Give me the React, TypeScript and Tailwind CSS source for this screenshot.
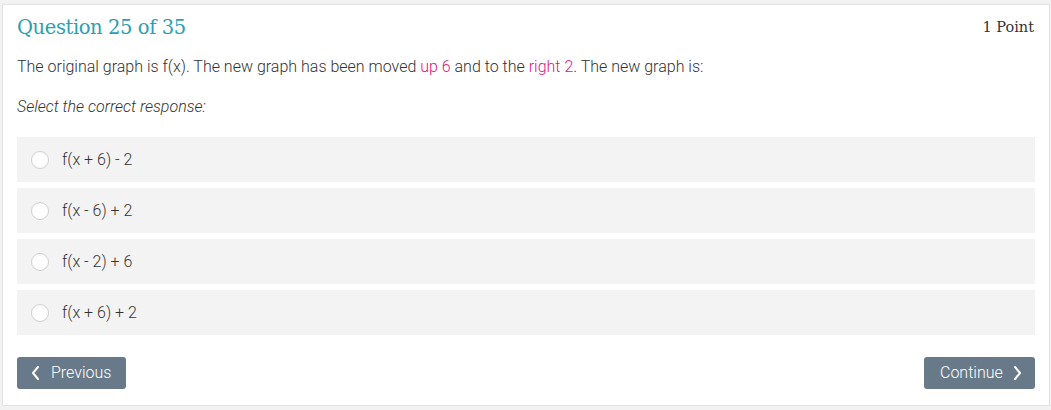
import React from "react";

const options = ["f(x + 6) - 2", "f(x - 6) + 2", "f(x - 2) + 6", "f(x + 6) + 2"];

export default function App() {
  return (
    <div className="w-[1051px] h-[410px] bg-[#f2f2f2] pt-[4px] pl-[2px] pr-[1px]" style={{ fontFamily: "Roboto, 'Noto Sans', sans-serif" }}>
      <div className="bg-white border border-[#e2e2e2] h-[402px] px-[14px] pt-[10px] flex flex-col">
        <div className="flex items-center justify-between h-[26px]">
          <div className="text-[19.5px] text-[#2aa0b3] tracking-[-0.4px]" style={{ fontFamily: "'DejaVu Serif', serif", fontWeight: 300 }}>
            Question 25 of 35
          </div>
          <div className="text-[14.5px] text-[#333] pr-[1px]" style={{ fontFamily: "'DejaVu Serif', serif" }}>1 Point</div>
        </div>
        <p className="mt-[16px] text-[16px] font-light text-[#333] leading-[20px]">
          The original graph is f(x). The new graph has been moved <span className="text-[#e0157b]">up 6</span> and to the{" "}
          <span className="text-[#e0157b]">right 2</span>. The new graph is:
        </p>
        <p className="mt-[20px] text-[16px] font-light italic text-[#333] leading-[20px]">Select the correct response:</p>
        <div className="mt-[20px] flex flex-col gap-[6px]">
          {options.map((o) => (
            <div key={o} className="h-[45px] bg-[#f3f3f3] flex items-center pl-[14px]">
              <span className="w-[18px] h-[18px] rounded-full border border-[#cfcfcf] bg-white"></span>
              <span className="ml-[13px] text-[16px] font-light text-[#333]">{o}</span>
            </div>
          ))}
        </div>
        <div className="mt-[22px] flex justify-between">
          <button className="h-[32px] w-[109px] bg-[#687a89] rounded-[3px] text-white text-[16px] font-light flex items-center pl-[14px] gap-[10px]">
            <svg width="10" height="16" viewBox="0 0 10 16" fill="none" stroke="white" strokeWidth="2" strokeLinecap="round" strokeLinejoin="round">
              <path d="M7 2 L2 8 L7 14" />
            </svg>
            Previous
          </button>
          <button className="h-[32px] w-[111px] bg-[#687a89] rounded-[3px] text-white text-[16px] font-light flex items-center pl-[16px] gap-[9px]">
            Continue
            <svg width="10" height="16" viewBox="0 0 10 16" fill="none" stroke="white" strokeWidth="2" strokeLinecap="round" strokeLinejoin="round">
              <path d="M3 2 L8 8 L3 14" />
            </svg>
          </button>
        </div>
      </div>
    </div>
  );
}
